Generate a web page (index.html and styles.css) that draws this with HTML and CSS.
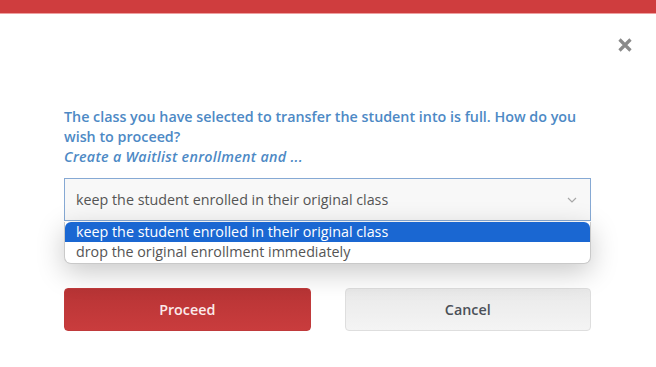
FILE: index.html
```html
<!DOCTYPE html>
<html>
<head>
<meta charset="utf-8">
<link rel="stylesheet" href="styles.css">
</head>
<body>
<div class="topbar"></div>
<div class="modal">
  <div class="close-row">
    <svg class="close" width="16" height="16" viewBox="0 0 16 16"><path d="M2.5 2.5 L13.5 13.5 M13.5 2.5 L2.5 13.5" stroke="#8a8a8a" stroke-width="3.2" stroke-linecap="butt"/></svg>
  </div>
  <div class="content">
    <p class="message">The class you have selected to transfer the student into is full. How do you wish to proceed?<br><em>Create a Waitlist enrollment and ...</em></p>
    <div class="select-wrap">
      <div class="select">
        <span>keep the student enrolled in their original class</span>
        <svg class="chev" width="10" height="6" viewBox="0 0 10 6"><path d="M1 1 L5 5 L9 1" fill="none" stroke="#a8a8a8" stroke-width="1.2"/></svg>
      </div>
      <ul class="options">
        <li class="opt selected">keep the student enrolled in their original class</li>
        <li class="opt">drop the original enrollment immediately</li>
      </ul>
    </div>
    <div class="buttons">
      <button class="btn btn-primary">Proceed</button>
      <button class="btn btn-secondary">Cancel</button>
    </div>
  </div>
</div>
</body>
</html>
```

FILE: styles.css
```css
html, body {
  margin: 0;
  padding: 0;
  background: #fff;
  font-family: "Open Sans", "Liberation Sans", sans-serif;
}
.topbar {
  height: 13px;
  background: #cf3d3e;
  border-bottom: 1px solid #eea0a0;
}
.modal {
  padding: 0 23px 0 64px;
}
.close-row {
  display: flex;
  justify-content: flex-end;
  padding-top: 23px;
  height: 16px;
}
.content {
  width: 527px;
}
.message {
  margin: 54px 0 0 0;
  font-size: 14.3px;
  line-height: 20px;
  font-weight: 600;
  color: #4d89c5;
}
.message em {
  font-style: italic;
  letter-spacing: 0.3px;
}
.select-wrap {
  position: relative;
  margin-top: 11px;
}
.select {
  box-sizing: border-box;
  height: 43px;
  border: 1px solid #86a9d4;
  background: #f8f8f8;
  display: flex;
  align-items: center;
  justify-content: space-between;
  padding: 0 13px 0 11px;
  font-size: 14.3px;
  color: #555;
}
.chev {
  margin-top: 1px;
}
.options {
  position: absolute;
  left: 0;
  right: 0;
  top: 44px;
  margin: 0;
  padding: 0 0 1px 0;
  list-style: none;
  background: #fff;
  border: 1px solid #c9c9c9;
  border-top: none;
  border-radius: 0 0 7px 7px;
  box-shadow: 0 8px 28px rgba(0, 0, 0, 0.22);
  overflow: hidden;
}
.opt {
  height: 20px;
  line-height: 20px;
  padding-left: 11px;
  font-size: 14.3px;
  color: #555;
}
.opt.selected {
  background: #1a67d2;
  color: #fff;
  border-radius: 6px 6px 0 0;
}
.buttons {
  display: grid;
  grid-template-columns: 1fr 1fr;
  column-gap: 34px;
  margin-top: 67px;
}
.btn {
  height: 43px;
  border-radius: 4px;
  font-family: "Open Sans", "Liberation Sans", sans-serif;
  font-size: 14.3px;
  font-weight: 600;
  cursor: pointer;
}
.btn-primary {
  background: linear-gradient(#b83435, #c93c3d);
  border: 1px solid #c03a3b;
  color: #fbeaea;
}
.btn-secondary {
  background: linear-gradient(#e9e9e9, #f4f4f4);
  border: 1px solid #dedede;
  color: #4b5058;
}
```
